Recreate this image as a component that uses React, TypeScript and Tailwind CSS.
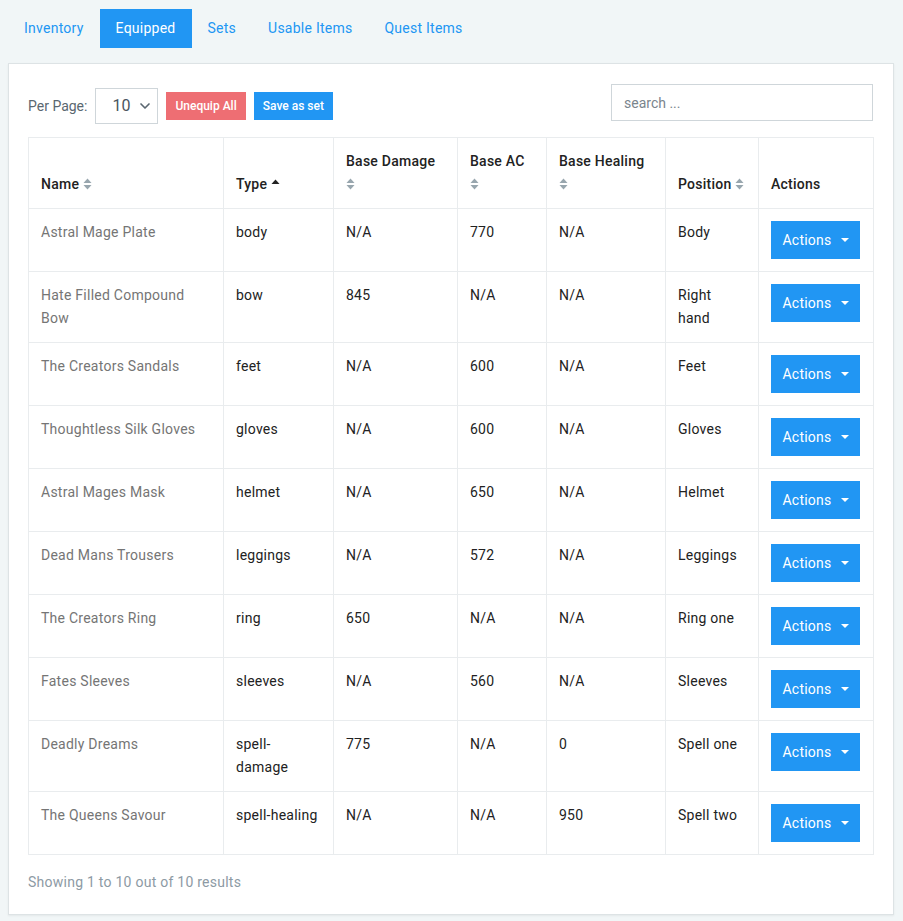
import { ChevronDown } from "lucide-react";

const tabs = ["Inventory", "Equipped", "Sets", "Usable Items", "Quest Items"];

interface Item {
  name: string;
  type: string;
  damage: string;
  ac: string;
  healing: string;
  position: string;
}

const items: Item[] = [
  { name: "Astral Mage Plate", type: "body", damage: "N/A", ac: "770", healing: "N/A", position: "Body" },
  { name: "Hate Filled Compound Bow", type: "bow", damage: "845", ac: "N/A", healing: "N/A", position: "Right hand" },
  { name: "The Creators Sandals", type: "feet", damage: "N/A", ac: "600", healing: "N/A", position: "Feet" },
  { name: "Thoughtless Silk Gloves", type: "gloves", damage: "N/A", ac: "600", healing: "N/A", position: "Gloves" },
  { name: "Astral Mages Mask", type: "helmet", damage: "N/A", ac: "650", healing: "N/A", position: "Helmet" },
  { name: "Dead Mans Trousers", type: "leggings", damage: "N/A", ac: "572", healing: "N/A", position: "Leggings" },
  { name: "The Creators Ring", type: "ring", damage: "650", ac: "N/A", healing: "N/A", position: "Ring one" },
  { name: "Fates Sleeves", type: "sleeves", damage: "N/A", ac: "560", healing: "N/A", position: "Sleeves" },
  { name: "Deadly Dreams", type: "spell-damage", damage: "775", ac: "N/A", healing: "0", position: "Spell one" },
  { name: "The Queens Savour", type: "spell-healing", damage: "N/A", ac: "N/A", healing: "950", position: "Spell two" },
];

function SortIcon() {
  return (
    <svg width="9" height="12" viewBox="0 0 9 12" className="inline-block align-[-1px]">
      <path d="M4.5 0.5 L8.5 5 L0.5 5 Z" fill="#98a6ae" />
      <path d="M4.5 11.5 L8.5 7 L0.5 7 Z" fill="#98a6ae" />
    </svg>
  );
}

function SortAsc() {
  return (
    <svg width="9" height="6" viewBox="0 0 9 6" className="inline-block align-[4px]">
      <path d="M4.5 0.5 L8.5 5 L0.5 5 Z" fill="#222" />
    </svg>
  );
}

const th = "border border-[#e9ecee] px-3 pb-3 pt-3 align-bottom text-left text-sm font-medium leading-[23px] text-[#222]";
const td = "border border-[#e9ecee] px-3 pt-3 pb-3 align-top text-sm leading-[23px] text-[#222]";

export default function App() {
  return (
    <div className="min-h-[921px] bg-[#f1f6f7] pt-[9px] font-['Roboto',sans-serif] tracking-[0.25px]">
      <nav className="flex pl-2">
        {tabs.map((t) =>
          t === "Equipped" ? (
            <span key={t} className="bg-[#2196f3] px-4 py-[9px] text-sm leading-[21px] text-white">
              {t}
            </span>
          ) : (
            <span key={t} className="px-4 py-[9px] text-sm leading-[21px] text-[#2196f3]">
              {t}
            </span>
          ),
        )}
      </nav>

      <section className="mx-2 mt-[15px] w-[886px] border border-[#dde3e5] bg-white pl-[19px] pr-5 pt-5 pb-[22px] shadow-[0_1px_2px_rgba(0,0,0,0.06)]">
        <div className="flex items-start justify-between tracking-normal">
          <div className="flex items-center gap-2 pt-[4px]">
            <span className="text-sm text-[#5a6770]">Per Page:</span>
            <div className="flex h-9 w-[63px] items-center justify-between border border-[#cfd6da] pl-4 pr-[4px] text-base text-[#4a5560]">
              <span>10</span>
              <ChevronDown className="h-4 w-4 text-[#5a6770]" strokeWidth={2.5} />
            </div>
            <button className="h-7 bg-[#ee6e73] px-[9px] text-xs font-medium text-white">Unequip All</button>
            <button className="h-7 bg-[#2196f3] px-[9px] text-xs font-medium text-white">Save as set</button>
          </div>
          <div className="flex h-[37px] w-[262px] items-center border border-[#cfd6da] px-3 text-sm text-[#7a858d]">
            search ...
          </div>
        </div>

        <table className="mt-[13px] w-[845px] table-fixed border-collapse">
          <colgroup>
            <col className="w-[195px]" />
            <col className="w-[110px]" />
            <col className="w-[124px]" />
            <col className="w-[89px]" />
            <col className="w-[119px]" />
            <col className="w-[93px]" />
            <col className="w-[115px]" />
          </colgroup>
          <thead>
            <tr className="h-[71px]">
              <th className={th}>
                Name <SortIcon />
              </th>
              <th className={th}>
                Type <SortAsc />
              </th>
              <th className={th}>
                Base Damage
                <br />
                <SortIcon />
              </th>
              <th className={th}>
                Base AC
                <br />
                <SortIcon />
              </th>
              <th className={th}>
                Base Healing
                <br />
                <SortIcon />
              </th>
              <th className={th}>
                Position <SortIcon />
              </th>
              <th className={th}>Actions</th>
            </tr>
          </thead>
          <tbody>
            {items.map((it) => (
              <tr key={it.name}>
                <td className={`${td} !text-[#757575]`}>{it.name}</td>
                <td className={td}>{it.type}</td>
                <td className={td}>{it.damage}</td>
                <td className={td}>{it.ac}</td>
                <td className={td}>{it.healing}</td>
                <td className={td}>{it.position}</td>
                <td className="border border-[#e9ecee] px-3 py-3 align-top">
                  <button className="flex h-[38px] w-[89px] items-center justify-center gap-[9px] bg-[#2196f3] text-sm text-white">
                    Actions
                    <svg width="8" height="4" viewBox="0 0 8 4">
                      <path d="M0 0 L8 0 L4 4 Z" fill="#fff" />
                    </svg>
                  </button>
                </td>
              </tr>
            ))}
          </tbody>
        </table>

        <p className="mt-[17px] text-sm text-[#8d9aa4]">Showing 1 to 10 out of 10 results</p>
      </section>
    </div>
  );
}
